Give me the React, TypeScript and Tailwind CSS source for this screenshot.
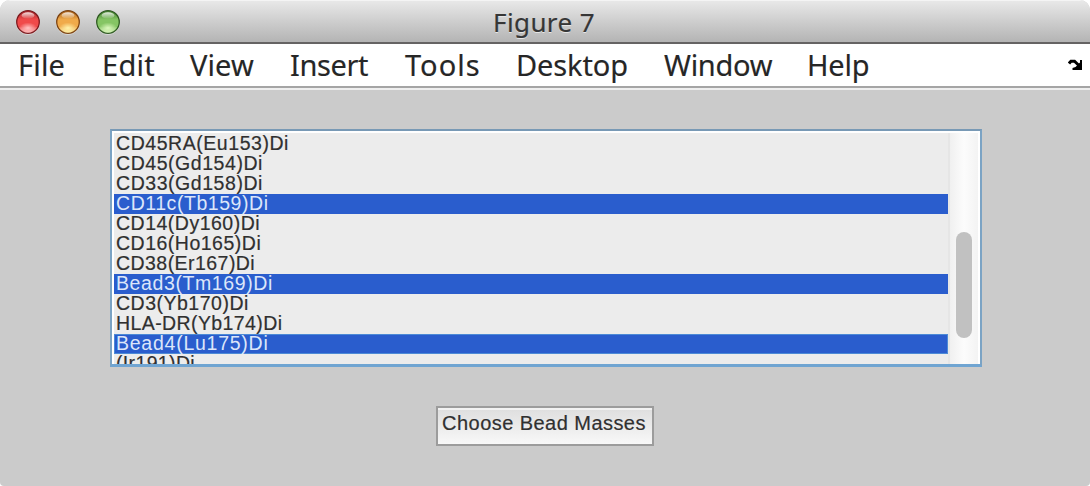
const menus = [
  { label: "File", cls: "w-[84px] tracking-[0.2px]" },
  { label: "Edit", cls: "w-[88px] tracking-[0.3px]" },
  { label: "View", cls: "w-[100px] tracking-[0.1px]" },
  { label: "Insert", cls: "w-[115px] tracking-[-0.4px]" },
  { label: "Tools", cls: "w-[111px] tracking-[1px]" },
  { label: "Desktop", cls: "w-[148px] tracking-[-0.1px]" },
  { label: "Window", cls: "w-[143px] tracking-[-0.3px]" },
  { label: "Help", cls: "tracking-[-0.2px]" },
];

const channels = [
  { name: "CD45RA(Eu153)Di", spacing: "tracking-[0.55px]" },
  { name: "CD45(Gd154)Di", spacing: "tracking-[0.55px]" },
  { name: "CD33(Gd158)Di", spacing: "tracking-[0.55px]" },
  { name: "CD11c(Tb159)Di", spacing: "tracking-[0.55px]", selected: true },
  { name: "CD14(Dy160)Di", spacing: "tracking-[0.5px]" },
  { name: "CD16(Ho165)Di", spacing: "tracking-[0.5px]" },
  { name: "CD38(Er167)Di", spacing: "tracking-[0.45px]" },
  { name: "Bead3(Tm169)Di", spacing: "tracking-[0.6px]", selected: true },
  { name: "CD3(Yb170)Di", spacing: "tracking-[0.5px]" },
  { name: "HLA-DR(Yb174)Di", spacing: "tracking-[0.4px]" },
  { name: "Bead4(Lu175)Di", spacing: "tracking-[0.75px]", selected: true, focused: true },
  { name: "(Ir191)Di", spacing: "tracking-[0.35px]" },
];

const lights = [
  { id: "close", rim: "#7d1a1e", top: "#a8282c", mid: "#f04a4a", low: "#ffc4c4" },
  { id: "minimise", rim: "#7d4312", top: "#a9611a", mid: "#f0aa4a", low: "#fff3ac" },
  { id: "zoom", rim: "#2f5a22", top: "#43802f", mid: "#85c564", low: "#dcf8be" },
];

function Light({ id, rim, top, mid, low }: (typeof lights)[number]) {
  return (
    <svg width="26" height="26" viewBox="0 0 26 26">
      <defs>
        <linearGradient id={`${id}-body`} x1="0" y1="0" x2="0" y2="1">
          <stop offset="0" stopColor={top} />
          <stop offset="0.4" stopColor={mid} />
          <stop offset="0.7" stopColor={mid} />
          <stop offset="1" stopColor={low} />
        </linearGradient>
        <linearGradient id={`${id}-shine`} x1="0" y1="0" x2="0" y2="1">
          <stop offset="0" stopColor="#fff" stopOpacity="0.85" />
          <stop offset="1" stopColor="#fff" stopOpacity="0.05" />
        </linearGradient>
        <radialGradient id={`${id}-glow`}>
          <stop offset="0" stopColor={low} />
          <stop offset="1" stopColor={low} stopOpacity="0" />
        </radialGradient>
      </defs>
      <circle cx="13" cy="13.8" r="12" fill="#eee" opacity="0.7" />
      <circle cx="13" cy="13" r="11.3" fill={`url(#${id}-body)`} stroke={rim} strokeWidth="1.3" />
      <ellipse cx="13" cy="19" rx="9" ry="5.5" fill={`url(#${id}-glow)`} />
      <ellipse cx="13" cy="6.5" rx="6.4" ry="3.2" fill={`url(#${id}-shine)`} />
    </svg>
  );
}

export default function App() {
  return (
    <div className="h-[486px] w-[1090px] overflow-hidden bg-white">
      <div className="flex h-full flex-col overflow-hidden rounded-t-[10px] rounded-b-[4px] bg-[#cbcbcb]">
        <header className="grid h-11 shrink-0 grid-cols-[1fr_auto_1fr] border-t border-b-2 border-t-[#f4f4f4] border-b-[#656363] bg-linear-to-b from-[#e8e8e8] to-[#b4b4b4]">
          <div className="flex gap-[14px] pt-[8px] pl-[15px]">
            {lights.map((l) => (
              <Light key={l.id} {...l} />
            ))}
          </div>
          <h1 className="pt-[3px] pr-[2px] font-['Noto_Sans',sans-serif] text-[26px] leading-[36px] tracking-[0.4px] whitespace-nowrap text-[#363636] [-webkit-text-stroke:0.2px_#363636] [text-shadow:0_1px_0_#e6e6e6]">
            Figure 7
          </h1>
        </header>
        <nav className="flex h-[42px] shrink-0 items-start bg-white pl-[18px] font-['Noto_Sans',sans-serif] text-[29px] leading-[42px] text-[#262626] [-webkit-text-stroke:0.15px_#262626]">
          {menus.map((m) => (
            <span key={m.label} className={`shrink-0 whitespace-nowrap ${m.cls}`}>
              {m.label}
            </span>
          ))}
          <svg className="mt-[14px] mr-[6px] ml-auto" width="16" height="14" viewBox="0 0 16 14">
            <path d="M1 5.5 L3 3.2 H6.5 L12 8.5" fill="none" stroke="#000" strokeWidth="3" />
            <path d="M14 2 V12 H4.5 V10 L7.5 9 L12 4.5 V2 Z" fill="#000" />
          </svg>
        </nav>
        <div className="h-[2px] shrink-0 bg-[#a5a5a5]" />
        <div className="h-[2px] shrink-0 bg-[#efefef]" />
        <main className="flex flex-col items-center pt-[39px] font-['Liberation_Sans',Arial,sans-serif] text-[#303030]">
          <div className="ml-[2px] flex h-[238px] w-[872px] overflow-hidden border-2 border-[#7ba3c4] border-t-[#7899b5] border-b-[3px] border-b-[#70a5d2] bg-white pt-[2px] pl-[2px]">
            <ul className="w-[834px] shrink-0 overflow-hidden bg-[#ececec] pt-px text-[19.5px] leading-[19px]">
              {channels.map((c) => (
                <li
                  key={c.name}
                  className={`h-5 pl-[2px] whitespace-nowrap ${c.spacing} ${
                    c.focused
                      ? "bg-[#2a5dcd] text-[#dce6fa] shadow-[inset_0_0_0_1px_#4c8ad6]"
                      : c.selected
                        ? "bg-[#2a5dcd] text-[#dce6fa]"
                        : "[-webkit-text-stroke:0.2px_#303030]"
                  }`}
                >
                  {c.name}
                </li>
              ))}
            </ul>
            <div className="flex w-[30px] shrink-0 justify-center border-l-2 border-[#e6e6e6] bg-linear-to-r from-[#f0f0f0] via-[#fcfcfc] to-[#f3f3f3] pt-[99px]">
              <div className="h-[106px] w-4 rounded-full bg-[#c1c1c1]" />
            </div>
          </div>
          <button className="mt-[39px] flex h-10 w-[218px] justify-center border-2 border-[#9c9c9c] bg-linear-to-b from-[#dedede] to-[#f8f8f8] pt-[5px] pr-[2px] text-[20px] leading-[20px] tracking-[0.45px] whitespace-nowrap shadow-[inset_0_2px_0_#f2f2f2] [-webkit-text-stroke:0.2px_#303030]">
            Choose Bead Masses
          </button>
        </main>
      </div>
    </div>
  );
}
